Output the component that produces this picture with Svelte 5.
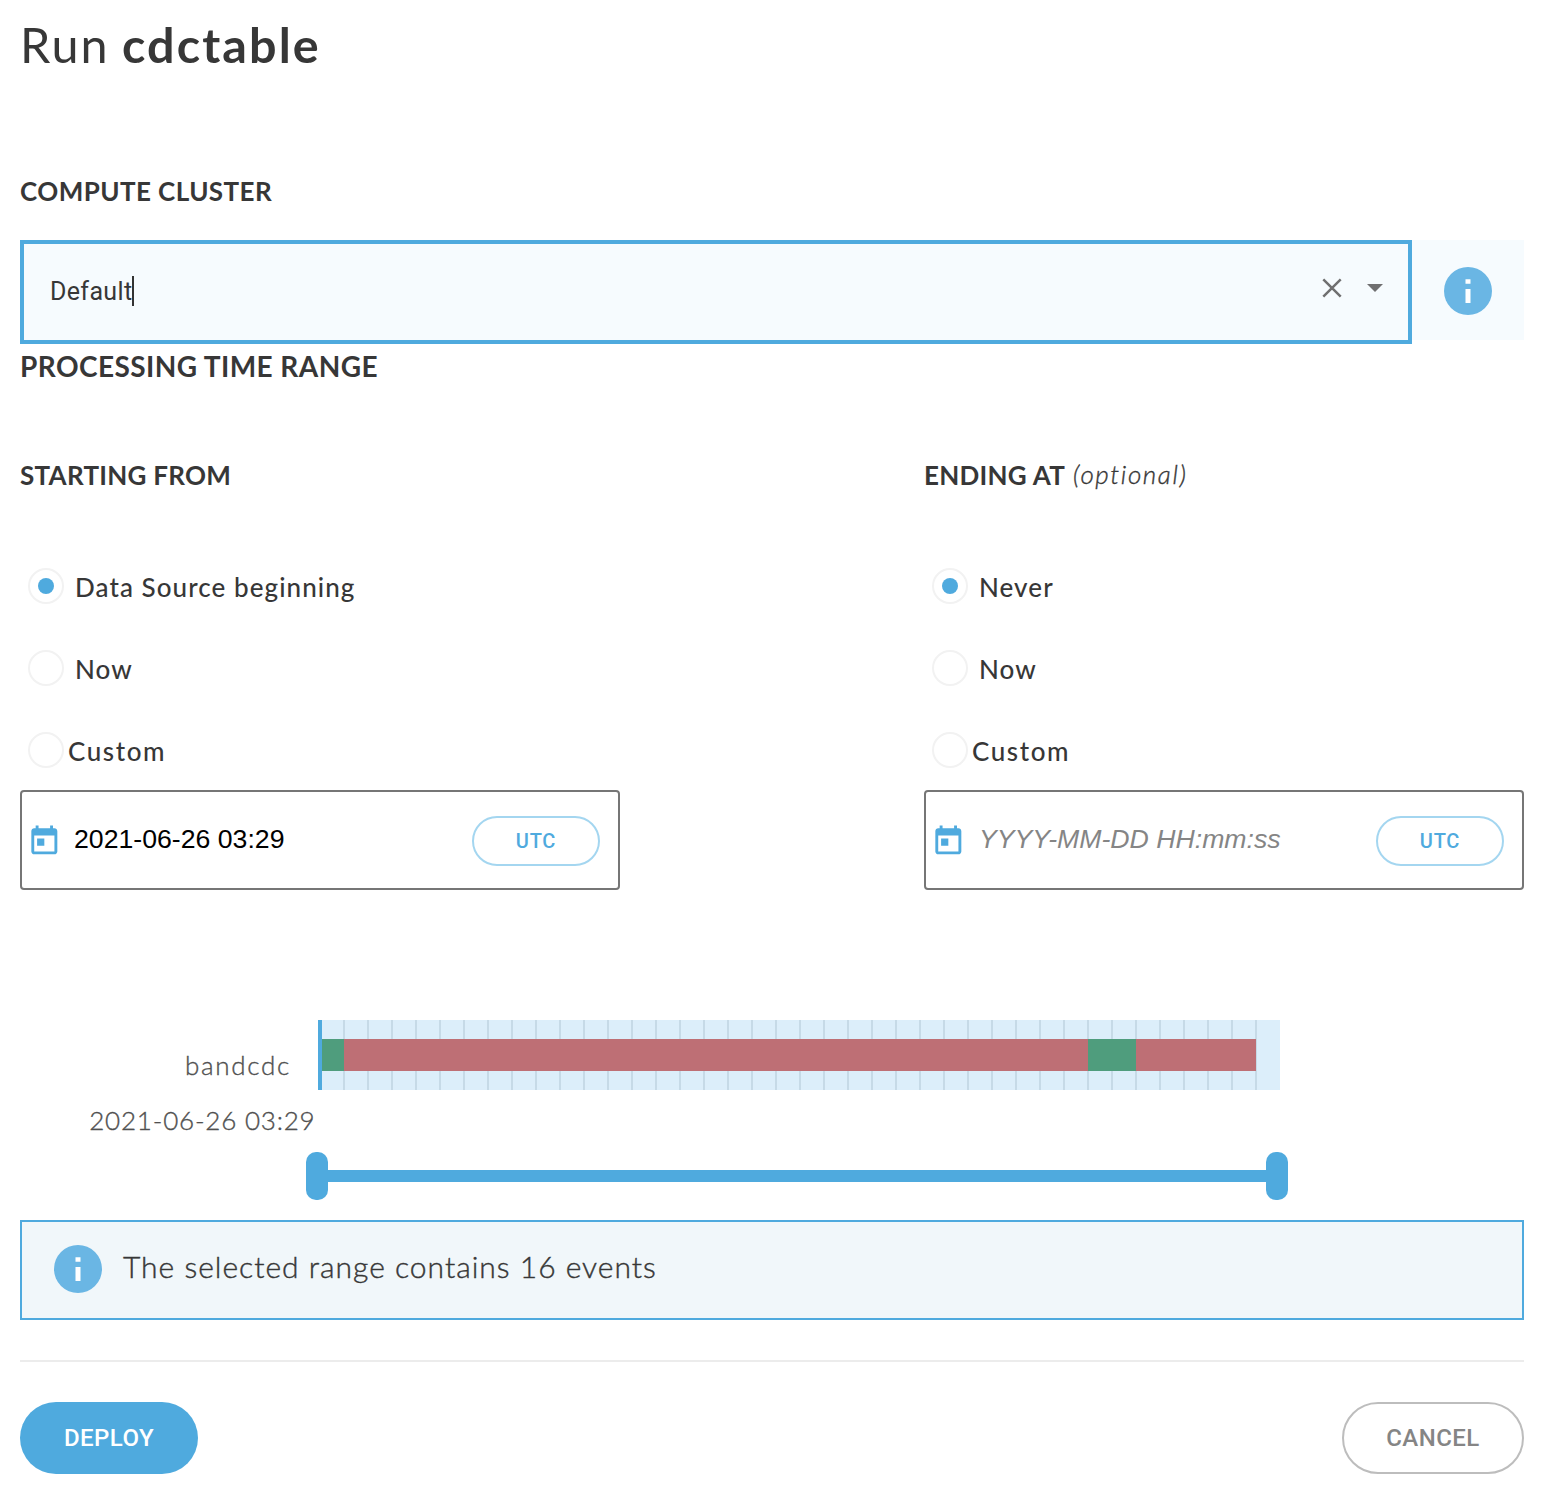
<script>
  const ranges = [
    {
      id: 'start', title: 'STARTING FROM', optional: false,
      options: ['Data Source beginning', 'Now', 'Custom'],
      value: '2021-06-26 03:29'
    },
    {
      id: 'end', title: 'ENDING AT', optional: true,
      options: ['Never', 'Now', 'Custom'],
      value: ''
    }
  ];
  const placeholder = 'YYYY-MM-DD HH:mm:ss';

  // widths are in chart pixels; one tick covers 24
  const segments = [
    { width: 22, kind: 'ok' },
    { width: 744, kind: 'bad' },
    { width: 48, kind: 'ok' },
    { width: 120, kind: 'bad' }
  ];
</script>

{#snippet info()}
  <svg class="info-icon" width="48" height="48" viewBox="0 0 48 48">
    <circle cx="24" cy="24" r="24" fill="#6ab6e4" />
    <path d="M21.5 12.2h5v4.6h-5zM21.5 22h5v14h-5z" fill="#fff" />
  </svg>
{/snippet}

<main>
  <h1>Run <b>cdctable</b></h1>

  <h2 class="cluster-title">COMPUTE CLUSTER</h2>
  <div class="cluster">
    <div class="select">
      <span class="select-value">Default</span>
      <span class="text-caret"></span>
      <svg class="clear" width="20" height="20" viewBox="0 0 20 20">
        <path d="M1.3 1.3l17.4 17.4M18.7 1.3l-17.4 17.4" stroke="#6f6f70" stroke-width="2.5" fill="none" />
      </svg>
      <svg class="arrow" width="16" height="8" viewBox="0 0 16 8">
        <path d="M0 0h16L8 8z" fill="#6f6f70" />
      </svg>
    </div>
    <div class="cluster-info">{@render info()}</div>
  </div>

  <h2 class="range-title">PROCESSING TIME RANGE</h2>

  <div class="ranges">
    {#each ranges as range (range.id)}
      <section>
        <h3><span>{range.title}</span>{#if range.optional}<em>(optional)</em>{/if}</h3>
        {#each range.options as option, i}
          <div class="option" class:custom={i === 2}>
            <span class="radio" class:checked={i === 0}></span>
            <span class="option-label">{option}</span>
          </div>
        {/each}
        <div class="date">
          <svg class="calendar" width="34.67" height="34.67" viewBox="0 0 24 24">
            <path fill="#4faade" d="M19 3h-1V1h-2v2H8V1H6v2H5c-1.11 0-1.99.9-1.99 2L3 19c0 1.1.89 2 2 2h14c1.1 0 2-.9 2-2V5c0-1.1-.9-2-2-2zm0 16H5V8h14v11zM7 10h5v5H7z" />
          </svg>
          <span class="date-value" class:empty={!range.value}>{range.value || placeholder}</span>
          <button class="utc">UTC</button>
        </div>
      </section>
    {/each}
  </div>

  <div class="timeline">
    <div class="legend">
      <span class="source">bandcdc</span>
      <span class="from">2021-06-26 03:29</span>
    </div>
    <div class="chart">
      <div class="plot">
        <div class="bar">
          {#each segments as s}
            <span class={s.kind} style="width:{s.width}px"></span>
          {/each}
        </div>
      </div>
      <div class="slider">
        <span class="handle"></span>
        <span class="track"></span>
        <span class="handle"></span>
      </div>
    </div>
  </div>

  <div class="notice">
    {@render info()}
    <span class="notice-text">The selected range contains 16 events</span>
  </div>

  <footer>
    <button class="deploy">DEPLOY</button>
    <button class="cancel">CANCEL</button>
  </footer>
</main>

<style>
  :global(body) {
    background: #fff;
  }
  main {
    box-sizing: border-box;
    width: 1542px;
    height: 1488px;
    padding: 0 18px 0 20px;
    font-family: Lato, 'Open Sans', sans-serif;
    font-variant-ligatures: none;
    color: #373737;
    display: flex;
    flex-direction: column;
  }
  h1, h2, h3 {
    margin: 0;
    white-space: nowrap;
  }
  h1 {
    height: 170px;
    font-size: 48.5px;
    line-height: 88px;
    font-weight: 400;
    letter-spacing: 2px;
    word-spacing: -2px;
  }
  h1 b {
    font-weight: 700;
    letter-spacing: 2.1px;
  }
  .cluster-title {
    height: 70px;
    font-size: 26px;
    line-height: 42px;
    font-weight: 700;
    letter-spacing: 0.43px;
  }
  .cluster {
    display: flex;
    align-items: flex-start;
    height: 104px;
  }
  .select {
    box-sizing: border-box;
    flex: 1;
    height: 104px;
    border: 4px solid #4faade;
    background: #f6fbfe;
    display: flex;
    align-items: center;
    padding: 0 25px 0 26px;
  }
  .select-value {
    font: 400 25px/30px Roboto, sans-serif;
    letter-spacing: 0.35px;
  }
  .text-caret {
    width: 2px;
    height: 30px;
    background: #333;
    margin: 0 auto 2px -0.5px;
  }
  .clear {
    margin: 0 25px 8px 0;
  }
  .arrow {
    margin-bottom: 8px;
  }
  .cluster-info {
    box-sizing: border-box;
    width: 112px;
    height: 100px;
    background: #f6fbfe;
    display: flex;
    align-items: center;
    justify-content: center;
    padding-top: 2px;
  }
  .info-icon {
    flex: none;
    display: block;
  }
  .range-title {
    height: 110px;
    font-size: 28px;
    line-height: 45px;
    font-weight: 700;
    letter-spacing: 0.42px;
  }
  .ranges {
    display: flex;
    justify-content: space-between;
    height: 566px;
  }
  section {
    width: 600px;
  }
  h3 {
    height: 91px;
    font-size: 26px;
    line-height: 42px;
    font-weight: 700;
    letter-spacing: 0.27px;
    display: flex;
    gap: 8px;
  }
  h3 em {
    font-weight: 300;
    line-height: 41px;
    letter-spacing: 1.6px;
    -webkit-text-stroke: 0.35px #373737;
  }
  .option {
    height: 82px;
    display: flex;
    align-items: center;
    gap: 11px;
    padding-left: 8px;
    font-size: 26px;
    line-height: 40px;
    font-weight: 500;
    letter-spacing: 1.07px;
  }
  .option.custom {
    gap: 4px;
    letter-spacing: 1.6px;
  }
  .radio {
    box-sizing: border-box;
    width: 36px;
    height: 36px;
    border: 2px solid #f2f2f2;
    border-radius: 50%;
    display: flex;
    align-items: center;
    justify-content: center;
  }
  .radio.checked::before {
    content: '';
    width: 16px;
    height: 16px;
    border-radius: 50%;
    background: #4faade;
  }
  .option-label {
    padding-top: 1px;
  }
  .date {
    box-sizing: border-box;
    height: 100px;
    margin-top: -1px;
    border: 2px solid #767676;
    border-radius: 4px;
    display: flex;
    align-items: center;
    padding: 0 18px 0 4.7px;
  }
  .calendar {
    flex: none;
    margin-top: 2px;
  }
  .date-value {
    flex: 1;
    margin: 0 0 3px 12.7px;
    font: 400 26.67px/32px 'Liberation Sans', Arial, sans-serif;
    color: #000;
  }
  .date-value.empty {
    margin-left: 13.7px;
    font-style: italic;
    color: #858585;
  }
  button {
    box-sizing: border-box;
    padding: 0;
    font-family: Roboto, sans-serif;
    font-weight: 500;
  }
  .utc {
    width: 128px;
    height: 50px;
    margin-top: 2px;
    border: 2px solid #a4d6f0;
    border-radius: 25px;
    background: #fff;
    color: #4faade;
    font-size: 20px;
    letter-spacing: 0.8px;
  }
  .timeline {
    display: flex;
    height: 200px;
  }
  .legend {
    width: 298px;
    display: flex;
    flex-direction: column;
    align-items: flex-end;
    font-size: 26px;
    font-weight: 300;
    color: #505050;
    -webkit-text-stroke: 0.35px #505050;
  }
  .source {
    line-height: 40px;
    margin: 25px 27px 0 0;
    letter-spacing: 1.7px;
  }
  .from {
    line-height: 40px;
    margin: 15px 2.5px 0 0;
    letter-spacing: 0.8px;
  }
  .chart {
    width: 962px;
  }
  .plot {
    box-sizing: border-box;
    height: 70px;
    padding-top: 19px;
    border-left: 4px solid #4faade;
    background:
      linear-gradient(#dceefa, #dceefa) right / 23px 100% no-repeat,
      repeating-linear-gradient(90deg, #dceefa 0 21px, #c6dae7 21px 23px, #dceefa 23px 24px);
  }
  .bar {
    display: flex;
    height: 32px;
  }
  .ok {
    background: #4f9d7d;
  }
  .bad {
    background: #be6f75;
  }
  .slider {
    display: flex;
    align-items: center;
    margin: 62px -8px 0 -12px;
  }
  .handle {
    width: 22px;
    height: 48px;
    border-radius: 10px;
    background: #4faade;
  }
  .track {
    flex: 1;
    height: 12px;
    background: #4faade;
  }
  .notice {
    box-sizing: border-box;
    height: 100px;
    border: 2px solid #4faade;
    background: #f1f7fa;
    display: flex;
    align-items: center;
    gap: 21px;
    padding: 0 32px 2px;
    font-size: 30px;
    font-weight: 300;
    letter-spacing: 1px;
    -webkit-text-stroke: 0.4px #373737;
  }
  .notice-text {
    padding-bottom: 7px;
  }
  footer {
    display: flex;
    justify-content: space-between;
    margin-top: 40px;
    padding-top: 40px;
    border-top: 2px solid #ececec;
  }
  footer button {
    height: 72px;
    border-radius: 36px;
    font-size: 24px;
    letter-spacing: 0.45px;
  }
  .deploy {
    width: 178px;
    border: 0;
    background: #4faade;
    color: #fff;
  }
  .cancel {
    width: 182px;
    border: 2px solid #bdbdbd;
    background: #fff;
    color: #858585;
  }
</style>
